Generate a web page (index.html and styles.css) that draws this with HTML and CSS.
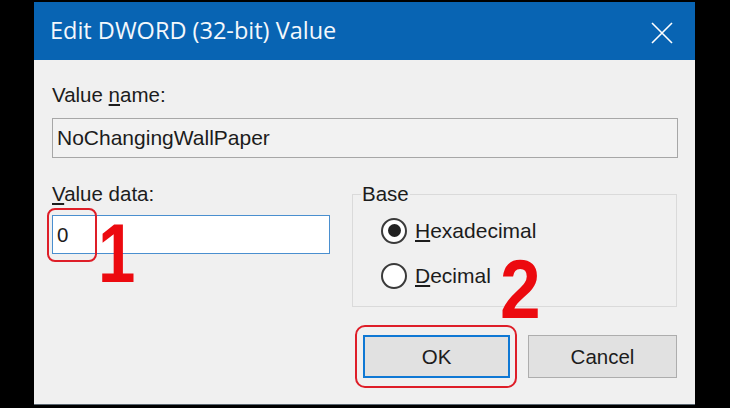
FILE: index.html
```html
<!DOCTYPE html>
<html lang="en">
<head>
<meta charset="utf-8">
<title>Edit DWORD (32-bit) Value</title>
<link rel="stylesheet" href="styles.css">
</head>
<body>
<div class="dialog">
  <div class="titlebar">
    <span class="title">Edit DWORD (32-bit) Value</span>
    <svg class="close" width="22" height="22" viewBox="0 0 22 22" aria-hidden="true">
      <path d="M1 1 L21 21 M21 1 L1 21" stroke="#ffffff" stroke-width="1.6" fill="none"/>
    </svg>
  </div>
  <div class="body">
    <div class="label">Value <u>n</u>ame:</div>
    <div class="field readonly">NoChangingWallPaper</div>
    <div class="row">
      <div class="col-left">
        <div class="label"><u>V</u>alue data:</div>
        <div class="field active">0</div>
      </div>
      <fieldset class="group">
        <legend>Base</legend>
        <div class="radio-row"><span class="radio checked"></span><span><u>H</u>exadecimal</span></div>
        <div class="radio-row"><span class="radio"></span><span><u>D</u>ecimal</span></div>
      </fieldset>
    </div>
    <div class="buttons">
      <div class="btn default">OK</div>
      <div class="btn">Cancel</div>
    </div>
  </div>
  <div class="mark box-zero"></div>
  <div class="mark box-ok"></div>
  <span class="num num-1">1</span>
  <span class="num num-2">2</span>
</div>
</body>
</html>
```

FILE: styles.css
```css
html, body {
  margin: 0;
  padding: 0;
  background: #000;
}
body {
  width: 730px;
  height: 408px;
  overflow: hidden;
}
.dialog {
  position: relative;
  margin: 2px 0 0 34px;
  width: 661px;
  height: 403px;
  background: #f0f0f0;
  border-bottom: 1px solid #5a6670;
  box-sizing: border-box;
  font-family: "Liberation Sans", Arial, sans-serif;
  font-size: 20.5px;
  color: #1c1c1c;
}
.titlebar {
  height: 58px;
  background: #0864b3;
  display: flex;
  align-items: center;
  justify-content: space-between;
  padding: 0 22px 0 16px;
}
.title {
  font-family: "Open Sans", "Noto Sans", sans-serif;
  font-size: 23.5px;
  color: #f4f8fc;
  line-height: 1;
  margin-top: -1px;
}
.close {
  display: block;
  margin-top: 3px;
}
.body {
  padding: 23px 17px 0 18px;
}
.label {
  line-height: 24px;
  height: 24px;
}
.field {
  box-sizing: border-box;
  height: 40px;
  border: 1px solid #a7a7a7;
  padding: 0 0 0 4px;
  line-height: 38px;
  margin-top: 11px;
}
.readonly {
  background: #f2f2f2;
  font-size: 21px;
}
.row {
  display: flex;
  margin-top: 24px;
  gap: 22px;
}
.col-left {
  width: 278px;
}
.active {
  background: #fff;
  border-color: #4a8fcf;
  height: 39px;
  margin-top: 9px;
  line-height: 37px;
}
.group {
  margin: 0;
  width: 325px;
  box-sizing: border-box;
  border: 1px solid #dadada;
  padding: 0 0 8px 28px;
  min-width: 0;
}
.group legend {
  margin-left: -20px;
  padding: 0 1px;
  line-height: 24px;
}
.radio-row {
  height: 45px;
  display: flex;
  align-items: center;
  gap: 8px;
  font-size: 21px;
}
.radio-row:first-of-type {
  margin-top: 2px;
}
.radio {
  width: 26px;
  height: 26px;
  box-sizing: border-box;
  border: 2px solid #3a3a3a;
  border-radius: 50%;
  background: #fff;
  display: flex;
  align-items: center;
  justify-content: center;
}
.radio.checked::after {
  content: "";
  width: 13px;
  height: 13px;
  border-radius: 50%;
  background: #222;
}
.buttons {
  display: flex;
  justify-content: flex-end;
  gap: 18px;
  margin-top: 28px;
  margin-right: 1px;
}
.btn {
  box-sizing: border-box;
  height: 43px;
  width: 149px;
  background: #e1e1e1;
  border: 1px solid #adadad;
  display: flex;
  align-items: center;
  justify-content: center;
}
.btn.default {
  width: 147px;
  border: 2px solid #0f78d4;
}
.mark {
  position: absolute;
  border: 2px solid #de1e28;
  box-sizing: border-box;
}
.box-zero {
  left: 13px;
  top: 206px;
  width: 50px;
  height: 54px;
  border-radius: 8px;
}
.box-ok {
  left: 321px;
  top: 323px;
  width: 162px;
  height: 63px;
  border-radius: 10px;
}
.num {
  position: absolute;
  font-family: "Liberation Sans", Arial, sans-serif;
  font-weight: bold;
  font-size: 84px;
  line-height: 1;
  color: #ec0a0f;
  transform-origin: left top;
}
.num-1 {
  left: 64px;
  top: 209px;
  transform: scaleX(0.8);
}
.num-2 {
  left: 466px;
  top: 245px;
  transform: scaleX(0.87);
}
```
